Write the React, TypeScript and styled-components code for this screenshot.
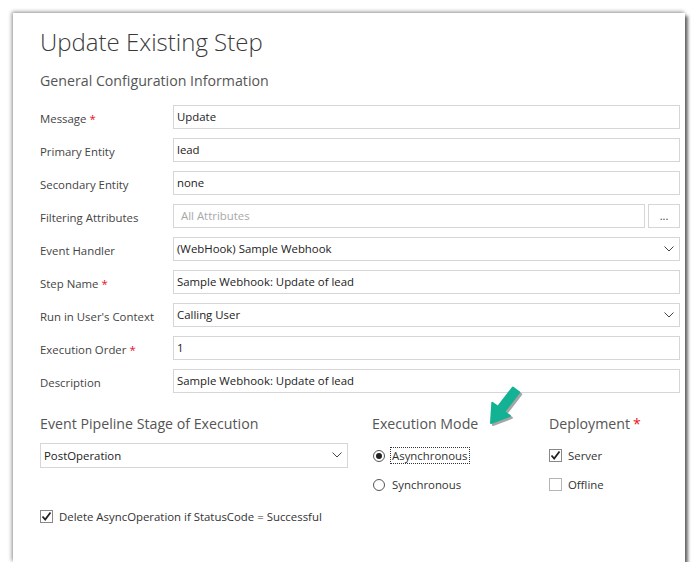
import React from "react";
import styled, { createGlobalStyle } from "styled-components";

const FONT = `"Open Sans", "Noto Sans", sans-serif`;

const GlobalStyle = createGlobalStyle`
  body {
    margin: 0;
    background: #ffffff;
    font-family: ${FONT};
  }
`;

const Page = styled.div`
  padding: 13px 0 0 13px;
`;

const Panel = styled.div`
  position: relative;
  box-sizing: border-box;
  width: 672px;
  height: 549px;
  background: #ffffff;
  padding: 14px 5px 0 27px;
  box-shadow: 3px 3px 3px rgba(0, 0, 0, 0.55), -1px -1px 4px rgba(0, 0, 0, 0.45);
`;

const Title = styled.h1`
  margin: 0;
  font-size: 24px;
  line-height: 30px;
  font-weight: 300;
  color: #3a3a3a;
`;

const SectionTitle = styled.h2<{ $top?: number }>`
  margin: ${(p) => p.$top ?? 0}px 0 0;
  font-size: 14.2px;
  line-height: 20px;
  font-weight: 400;
  color: #555555;
`;

const Required = styled.span`
  color: #e81123;
  margin-left: 3px;
`;

const FieldGrid = styled.div`
  display: grid;
  grid-template-columns: 133px 1fr;
  row-gap: 9px;
  margin-top: 14px;
`;

const Label = styled.div`
  box-sizing: border-box;
  height: 24px;
  font-size: 11.4px;
  line-height: 18px;
  padding-top: 5px;
  color: #444444;
  white-space: nowrap;
`;

const InputBox = styled.div<{ $placeholder?: boolean }>`
  position: relative;
  box-sizing: border-box;
  height: 24px;
  border: 1px solid #d6d6d6;
  padding: 1px 24px 0 3px;
  font-size: 11.4px;
  line-height: 19px;
  color: ${(p) => (p.$placeholder ? "#a8a8a8" : "#222222")};
  white-space: nowrap;
  overflow: hidden;
`;

const InputWithButton = styled.div`
  display: flex;
  gap: 3px;

  ${InputBox} {
    flex: 1;
    padding-left: 7px;
  }
`;

const LookupButton = styled.div`
  box-sizing: border-box;
  width: 32px;
  height: 24px;
  border: 1px solid #d6d6d6;
  font-size: 11px;
  line-height: 22px;
  text-align: center;
  color: #444444;
`;

const Chevron = styled.svg`
  position: absolute;
  right: 5px;
  top: 8px;
`;

const BottomGrid = styled.div`
  display: grid;
  grid-template-columns: 332px 177px 1fr;
  margin-top: 21px;
`;

const Column = styled.div`
  display: flex;
  flex-direction: column;
`;

const SelectBox = styled(InputBox)`
  width: 308px;
  height: 25px;
  margin-top: 9px;
  padding-top: 2px;
`;

const OptionList = styled.div`
  display: flex;
  flex-direction: column;
  gap: 12px;
  margin-top: 13px;
`;

const Option = styled.div`
  display: flex;
  align-items: center;
  height: 17px;
  font-size: 11.4px;
  color: #333333;
`;

const Radio = styled.span<{ $checked?: boolean }>`
  box-sizing: border-box;
  width: 12px;
  height: 12px;
  border-radius: 50%;
  border: 1px solid #555555;
  margin: 0 7px 0 1px;
  display: flex;
  align-items: center;
  justify-content: center;

  &::after {
    content: "";
    display: ${(p) => (p.$checked ? "block" : "none")};
    width: 6px;
    height: 6px;
    border-radius: 50%;
    background: #222222;
  }
`;

const Focused = styled.span`
  outline: 1px dotted #333333;
  padding: 0 1px;
  margin-left: -1px;
`;

const CheckBox = styled.span<{ $checked?: boolean }>`
  box-sizing: border-box;
  width: 13px;
  height: 13px;
  border: 1px solid ${(p) => (p.$checked ? "#888888" : "#b5b5b5")};
  margin-right: 6px;
  display: flex;
  align-items: center;
  justify-content: center;
`;

const CheckRow = styled(Option)`
  margin-top: 40px;
`;

const Arrow = styled.svg`
  position: absolute;
  left: 471px;
  top: 369px;
  overflow: visible;
`;

const ChevronIcon = () => (
  <Chevron width="10" height="6" viewBox="0 0 10 6">
    <polyline points="0.5,0.5 5,5 9.5,0.5" fill="none" stroke="#444" strokeWidth="1" />
  </Chevron>
);

const CheckMark = () => (
  <svg width="11" height="11" viewBox="0 0 11 11">
    <polyline points="1.5,5.5 4.2,8.5 9.5,1.5" fill="none" stroke="#222" strokeWidth="1.8" />
  </svg>
);

interface FieldProps {
  label: string;
  value: string;
  required?: boolean;
  select?: boolean;
  placeholder?: boolean;
}

const fields: FieldProps[] = [
  { label: "Message", value: "Update", required: true },
  { label: "Primary Entity", value: "lead" },
  { label: "Secondary Entity", value: "none" },
  { label: "Filtering Attributes", value: "All Attributes", placeholder: true },
  { label: "Event Handler", value: "(WebHook) Sample Webhook", select: true },
  { label: "Step Name", value: "Sample Webhook: Update of lead", required: true },
  { label: "Run in User's Context", value: "Calling User", select: true },
  { label: "Execution Order", value: "1", required: true },
  { label: "Description", value: "Sample Webhook: Update of lead" },
];

const FieldRow = ({ label, value, required, select, placeholder }: FieldProps) => (
  <>
    <Label>
      {label}
      {required && <Required>*</Required>}
    </Label>
    {placeholder ? (
      <InputWithButton>
        <InputBox $placeholder>{value}</InputBox>
        <LookupButton>...</LookupButton>
      </InputWithButton>
    ) : (
      <InputBox>
        {value}
        {select && <ChevronIcon />}
      </InputBox>
    )}
  </>
);

export default function App() {
  return (
    <Page>
      <GlobalStyle />
      <Panel>
        <Title>Update Existing Step</Title>
        <SectionTitle $top={14}>General Configuration Information</SectionTitle>
        <FieldGrid>
          {fields.map((f) => (
            <FieldRow key={f.label} {...f} />
          ))}
        </FieldGrid>

        <BottomGrid>
          <Column>
            <SectionTitle>Event Pipeline Stage of Execution</SectionTitle>
            <SelectBox>
              PostOperation
              <ChevronIcon />
            </SelectBox>
            <CheckRow>
              <CheckBox $checked>
                <CheckMark />
              </CheckBox>
              Delete AsyncOperation if StatusCode = Successful
            </CheckRow>
          </Column>
          <Column>
            <SectionTitle>Execution Mode</SectionTitle>
            <OptionList>
              <Option>
                <Radio $checked />
                <Focused>Asynchronous</Focused>
              </Option>
              <Option>
                <Radio />
                Synchronous
              </Option>
            </OptionList>
          </Column>
          <Column>
            <SectionTitle>
              Deployment<Required>*</Required>
            </SectionTitle>
            <OptionList>
              <Option>
                <CheckBox $checked>
                  <CheckMark />
                </CheckBox>
                Server
              </Option>
              <Option>
                <CheckBox />
                Offline
              </Option>
            </OptionList>
          </Column>
        </BottomGrid>

        <Arrow width="40" height="45" viewBox="0 0 40 45">
          <g transform="translate(2,2)" opacity="0.35">
            <polygon
              points="28.8,5.6 13.9,24.9 8.3,20.7 7,41 25.9,33.9 20.3,29.7 35.2,10.4"
              fill="#000"
              stroke="#000"
              strokeWidth="2"
              strokeLinejoin="round"
            />
          </g>
          <polygon
            points="28.8,5.6 13.9,24.9 8.3,20.7 7,41 25.9,33.9 20.3,29.7 35.2,10.4"
            fill="#14b294"
            stroke="#14b294"
            strokeWidth="2"
            strokeLinejoin="round"
          />
        </Arrow>
      </Panel>
    </Page>
  );
}
